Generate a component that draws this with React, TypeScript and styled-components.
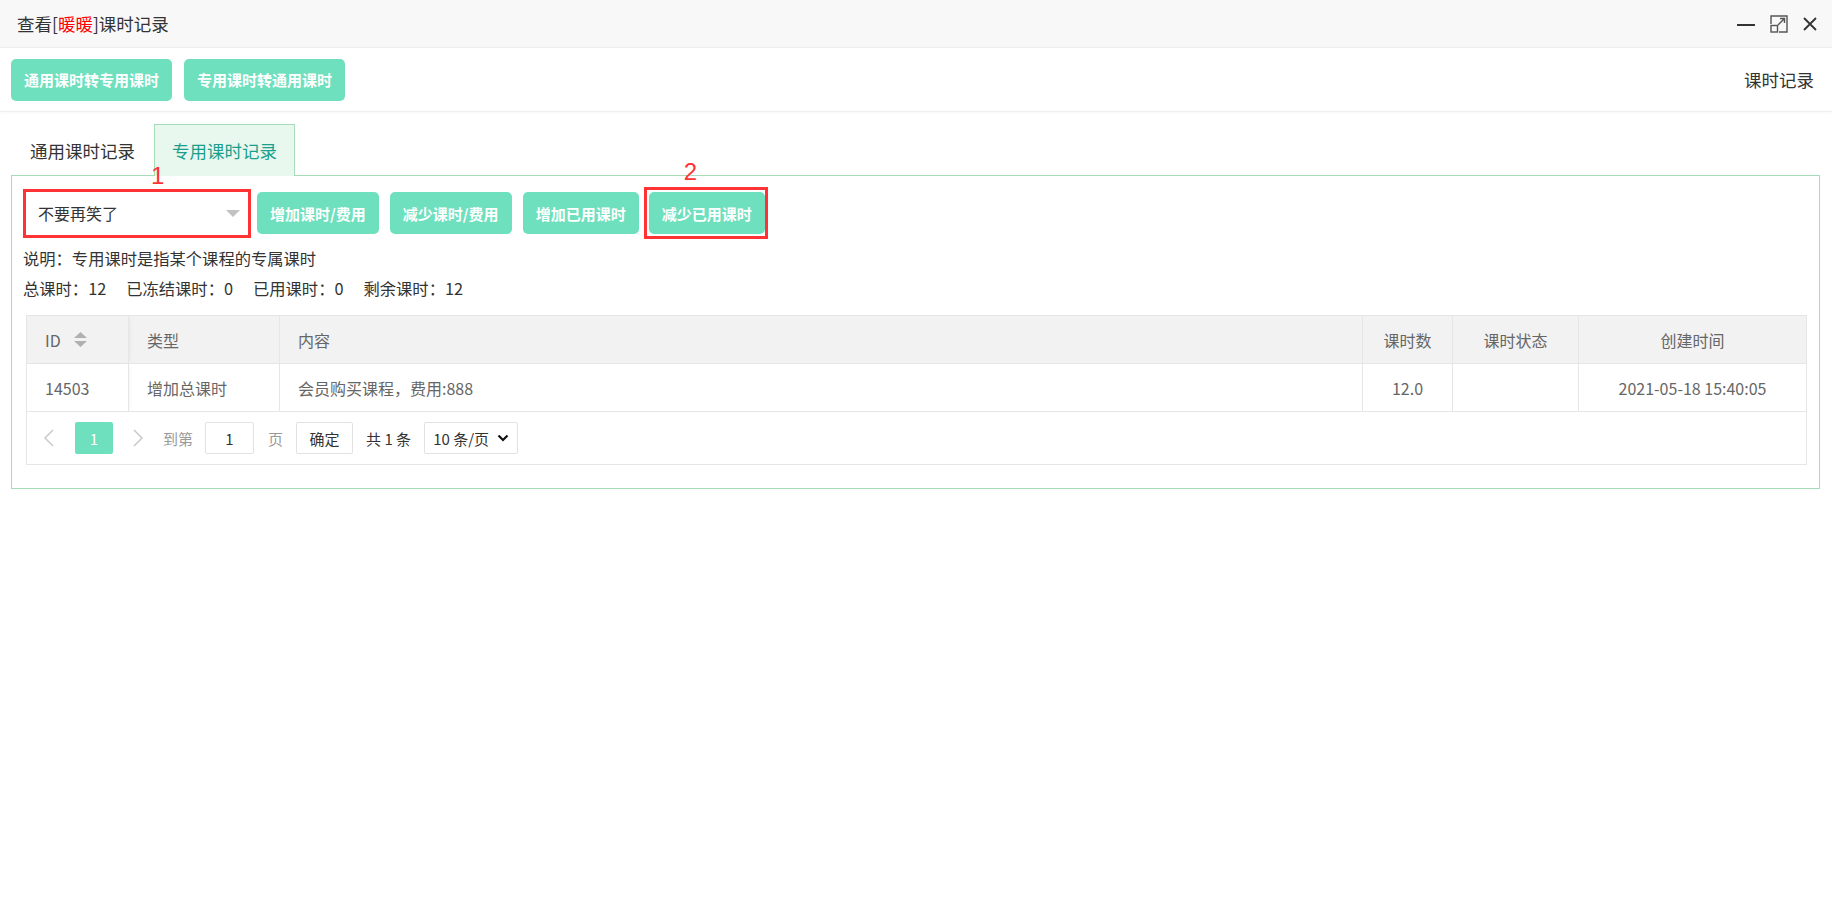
import React from 'react';
import styled, { createGlobalStyle } from 'styled-components';

const GlobalStyle = createGlobalStyle`
  body {
    margin: 0;
    background: #fff;
    color: #333;
    font-family: "Noto Sans CJK SC", "Noto Sans", sans-serif;
  }
  * {
    box-sizing: border-box;
  }
`;

const Page = styled.div`
  width: 1832px;
  min-height: 918px;
  background: #fff;
`;

const TitleBar = styled.div`
  height: 48px;
  background: #f8f8f8;
  border-bottom: 1px solid #eee;
  display: flex;
  align-items: center;
  justify-content: space-between;
  padding: 0 15px 0 17px;
`;

const Title = styled.div`
  font-size: 17.5px;
  color: #333;
`;

const Red = styled.span`
  color: #f00;
`;

const WinControls = styled.div`
  display: flex;
  align-items: center;
  gap: 15px;
  color: #333;
`;

const Toolbar = styled.div`
  height: 64px;
  display: flex;
  align-items: center;
  gap: 12px;
  padding: 0 18px 0 11px;
  border-bottom: 1px solid #eee;
  box-shadow: 0 1px 2px rgba(0, 0, 0, 0.03);
`;

const GreenButton = styled.button<{ $wide?: boolean }>`
  height: 42px;
  min-width: ${(p) => (p.$wide ? '160px' : '115px')};
  padding: 0 13px;
  border: 0;
  border-radius: 5px;
  background: #6ee0be;
  color: #fff;
  font-family: inherit;
  font-size: 15px;
  font-weight: 600;
  white-space: nowrap;
  cursor: pointer;
`;

const ToolbarTitle = styled.div`
  margin-left: auto;
  font-size: 17.5px;
  color: #333;
`;

const Main = styled.div`
  padding: 12px 12px 0 11px;
`;

const Tabs = styled.div`
  display: flex;
  height: 51px;
`;

const Tab = styled.div<{ $active?: boolean }>`
  height: ${(p) => (p.$active ? '52px' : '51px')};
  padding: 0 ${(p) => (p.$active ? '17px' : '18px')};
  display: flex;
  align-items: center;
  font-size: 17.5px;
  color: ${(p) => (p.$active ? '#1a9f8b' : '#333')};
  background: ${(p) => (p.$active ? '#e8f8ef' : 'transparent')};
  border: 1px solid ${(p) => (p.$active ? '#a6dcb7' : 'transparent')};
  border-bottom: 0;
  position: relative;
  z-index: 1;
`;

const Panel = styled.div`
  border: 1px solid #a6dcb7;
  padding: 11px 12px 23px 11px;
`;

const ActionRow = styled.div`
  display: flex;
  align-items: center;
  gap: 11px;
`;

const Marked = styled.div<{ $pull?: 'left' | 'right' }>`
  position: relative;
  border: 3px solid #ff3333;
  margin-left: ${(p) => (p.$pull === 'left' ? '-6px' : '0')};
  margin-right: ${(p) => (p.$pull === 'right' ? '-5px' : '0')};
  padding: ${(p) => (p.$pull === 'left' ? '2px 0 2px 2px' : '0')};
`;

const MarkNum = styled.span<{ $left: number; $lift: number }>`
  position: absolute;
  z-index: 2;
  left: ${(p) => p.$left}px;
  bottom: calc(100% + ${(p) => p.$lift}px);
  font-family: "Liberation Sans", Arial, sans-serif;
  font-size: 24px;
  line-height: 1;
  color: #ff3333;
`;

const SelectBox = styled.div`
  width: 222px;
  height: 43px;
  display: flex;
  align-items: center;
  justify-content: space-between;
  padding: 0 8px 0 12px;
  font-size: 16px;
  color: #333;
  background: #fff;
`;

const Info = styled.div`
  margin-top: 4px;
  font-size: 16.3px;
  color: #333;
`;

const InfoLine = styled.div`
  height: 30px;
  line-height: 30px;
  display: flex;
  gap: 20px;
`;

const Table = styled.div`
  margin: 12px 0 0 3px;
  border: 1px solid #e6e6e6;
  font-size: 16px;
  color: #666;
`;

const Row = styled.div<{ $head?: boolean }>`
  display: grid;
  grid-template-columns: 101px 151px 1fr 90px 126px 228px;
  height: 48px;
  background: ${(p) => (p.$head ? '#f2f2f2' : '#fff')};
  border-bottom: 1px solid #e6e6e6;
`;

const Cell = styled.div<{ $center?: boolean; $fixed?: boolean }>`
  display: flex;
  align-items: center;
  justify-content: ${(p) => (p.$center ? 'center' : 'flex-start')};
  padding: 0 18px;
  border-left: 1px solid #e6e6e6;
  white-space: nowrap;
  box-shadow: ${(p) => (p.$fixed ? '3px 0 5px -3px rgba(0, 0, 0, 0.12)' : 'none')};
  position: relative;
  &:first-child {
    border-left: 0;
  }
`;

const SortIcon = styled.span`
  display: inline-flex;
  margin-left: 13px;
`;

const Pager = styled.div`
  height: 52px;
  display: flex;
  align-items: center;
  padding-left: 16px;
  font-size: 15px;
`;

const PagerArrow = styled.span<{ $gap: number }>`
  display: inline-flex;
  width: 12px;
  justify-content: center;
  margin-right: ${(p) => p.$gap}px;
`;

const PageNum = styled.span`
  width: 38px;
  height: 32px;
  border-radius: 2px;
  background: #6ee0be;
  color: #fff;
  display: flex;
  align-items: center;
  justify-content: center;
  margin-right: 19px;
`;

const PagerText = styled.span<{ $dark?: boolean; $gap: number }>`
  color: ${(p) => (p.$dark ? '#333' : '#999')};
  margin-right: ${(p) => p.$gap}px;
  white-space: nowrap;
`;

const PagerBox = styled.span<{ $w: number; $gap: number }>`
  width: ${(p) => p.$w}px;
  height: 32px;
  border: 1px solid #e2e2e2;
  border-radius: 2px;
  display: flex;
  align-items: center;
  justify-content: center;
  gap: 8px;
  color: #333;
  margin-right: ${(p) => p.$gap}px;
  background: #fff;
`;

const MinimizeIcon = () => (
  <svg width="18" height="18" viewBox="0 0 18 18">
    <path d="M0 10h18" stroke="#333" strokeWidth="2" />
  </svg>
);

const MaximizeIcon = () => (
  <svg width="18" height="18" viewBox="0 0 18 18" fill="none" stroke="#555" strokeWidth="1.4">
    <path d="M1 9V1h16v16H9" />
    <rect x="1" y="10.5" width="6.5" height="6.5" />
    <path d="M8 10L14.5 3.5M10 3.5h4.5V8" />
  </svg>
);

const CloseIcon = () => (
  <svg width="14" height="14" viewBox="0 0 14 14">
    <path d="M1 1l12 12M13 1L1 13" stroke="#333" strokeWidth="1.8" />
  </svg>
);

const Caret = () => (
  <svg width="14" height="7" viewBox="0 0 14 7">
    <path d="M0 0h14L7 7z" fill="#c2c2c2" />
  </svg>
);

const Sort = () => (
  <svg width="13" height="15" viewBox="0 0 13 15">
    <path d="M6.5 0L13 6H0z" fill="#b0b0b0" />
    <path d="M6.5 15L0 9h13z" fill="#b0b0b0" />
  </svg>
);

const Chevron = ({ dir }: { dir: 'left' | 'right' }) => (
  <svg width="10" height="18" viewBox="0 0 10 18">
    <path
      d={dir === 'left' ? 'M9 1L1 9l8 8' : 'M1 1l8 8-8 8'}
      fill="none"
      stroke="#c8c8c8"
      strokeWidth="1.5"
    />
  </svg>
);

const DownArrow = () => (
  <svg width="12" height="8" viewBox="0 0 12 8">
    <path d="M1.5 1.5L6 6l4.5-4.5" fill="none" stroke="#111" strokeWidth="2.2" />
  </svg>
);

const columns = [
  { key: 'id', label: 'ID' },
  { key: 'type', label: '类型' },
  { key: 'content', label: '内容' },
  { key: 'count', label: '课时数', center: true },
  { key: 'status', label: '课时状态', center: true },
  { key: 'created', label: '创建时间', center: true },
];

const records = [
  {
    id: '14503',
    type: '增加总课时',
    content: '会员购买课程，费用:888',
    count: '12.0',
    status: '',
    created: '2021-05-18 15:40:05',
  },
];

const stats = [
  { label: '总课时', value: 12 },
  { label: '已冻结课时', value: 0 },
  { label: '已用课时', value: 0 },
  { label: '剩余课时', value: 12 },
];

const App = () => {
  return (
    <Page>
      <GlobalStyle />
      <TitleBar>
        <Title>
          查看[<Red>暖暖</Red>]课时记录
        </Title>
        <WinControls>
          <MinimizeIcon />
          <MaximizeIcon />
          <CloseIcon />
        </WinControls>
      </TitleBar>

      <Toolbar>
        <GreenButton $wide>通用课时转专用课时</GreenButton>
        <GreenButton $wide>专用课时转通用课时</GreenButton>
        <ToolbarTitle>课时记录</ToolbarTitle>
      </Toolbar>

      <Main>
        <Tabs>
          <Tab>通用课时记录</Tab>
          <Tab $active>专用课时记录</Tab>
        </Tabs>
        <Panel>
          <ActionRow>
            <Marked $pull="right">
              <MarkNum $left={125} $lift={4}>1</MarkNum>
              <SelectBox>
                <span>不要再笑了</span>
                <Caret />
              </SelectBox>
            </Marked>
            <GreenButton>增加课时/费用</GreenButton>
            <GreenButton>减少课时/费用</GreenButton>
            <GreenButton>增加已用课时</GreenButton>
            <Marked $pull="left">
              <MarkNum $left={37} $lift={6}>2</MarkNum>
              <GreenButton>减少已用课时</GreenButton>
            </Marked>
          </ActionRow>

          <Info>
            <InfoLine>说明：专用课时是指某个课程的专属课时</InfoLine>
            <InfoLine>
              {stats.map((s) => (
                <span key={s.label}>
                  {s.label}：{s.value}
                </span>
              ))}
            </InfoLine>
          </Info>

          <Table>
            <Row $head>
              {columns.map((c, i) => (
                <Cell key={c.key} $center={c.center} $fixed={i === 0}>
                  {c.label}
                  {c.key === 'id' && (
                    <SortIcon>
                      <Sort />
                    </SortIcon>
                  )}
                </Cell>
              ))}
            </Row>
            {records.map((r) => (
              <Row key={r.id}>
                {columns.map((c, i) => (
                  <Cell key={c.key} $center={c.center} $fixed={i === 0}>
                    {(r as any)[c.key]}
                  </Cell>
                ))}
              </Row>
            ))}
            <Pager>
              <PagerArrow $gap={20}>
                <Chevron dir="left" />
              </PagerArrow>
              <PageNum>1</PageNum>
              <PagerArrow $gap={19}>
                <Chevron dir="right" />
              </PagerArrow>
              <PagerText $gap={12}>到第</PagerText>
              <PagerBox $w={49} $gap={14}>1</PagerBox>
              <PagerText $gap={13}>页</PagerText>
              <PagerBox $w={57} $gap={13}>确定</PagerBox>
              <PagerText $dark $gap={13}>共 1 条</PagerText>
              <PagerBox $w={94} $gap={0}>
                10 条/页
                <DownArrow />
              </PagerBox>
            </Pager>
          </Table>
        </Panel>
      </Main>
    </Page>
  );
};

export default App;
